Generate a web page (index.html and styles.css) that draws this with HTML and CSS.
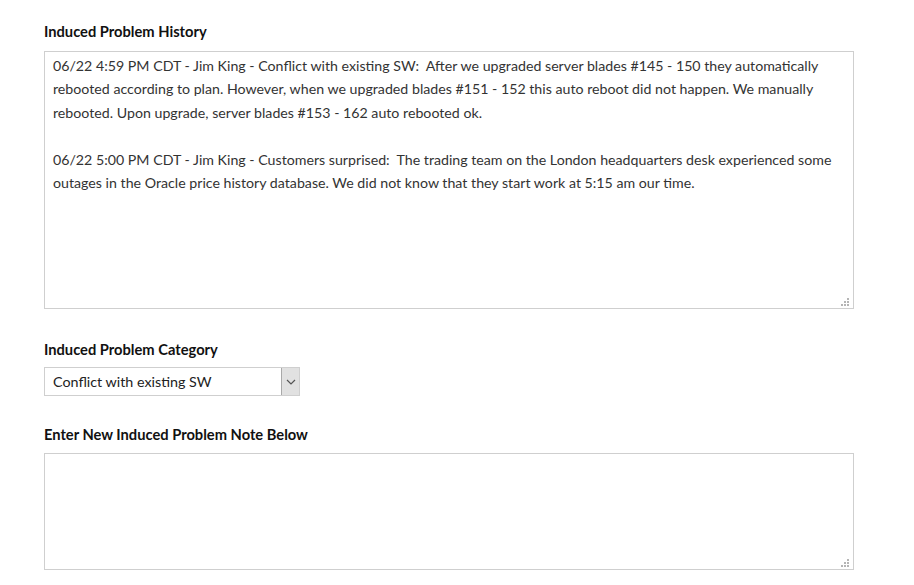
FILE: index.html
```html
<!DOCTYPE html>
<html>
<head>
<meta charset="utf-8">
<link rel="stylesheet" href="styles.css">
</head>
<body>
<div class="form">
  <label class="label first">Induced Problem History</label>
  <div class="area-wrap tall">
    <textarea class="area" readonly>06/22 4:59 PM CDT - Jim King - Conflict with existing SW:  After we upgraded server blades #145 - 150 they automatically rebooted according to plan. However, when we upgraded blades #151 - 152 this auto reboot did not happen. We manually rebooted. Upon upgrade, server blades #153 - 162 auto rebooted ok.

06/22 5:00 PM CDT - Jim King - Customers surprised:  The trading team on the London headquarters desk experienced some outages in the Oracle price history database. We did not know that they start work at 5:15 am our time.</textarea>
    <svg class="grip" width="9" height="9" viewBox="0 0 9 9"><g fill="#b5b5b5"><rect x="6" y="0" width="2" height="2"/><rect x="3" y="3" width="2" height="2"/><rect x="6" y="3" width="2" height="2"/><rect x="0" y="6" width="2" height="2"/><rect x="3" y="6" width="2" height="2"/><rect x="6" y="6" width="2" height="2"/></g></svg>
  </div>

  <label class="label cat">Induced Problem Category</label>
  <div class="select">
    <span class="select-text">Conflict with existing SW</span>
    <span class="select-arrow"><svg width="10" height="6" viewBox="0 0 10 6"><path d="M1 1 L5 5 L9 1" fill="none" stroke="#555" stroke-width="1.2"/></svg></span>
  </div>

  <label class="label">Enter New Induced Problem Note Below</label>
  <div class="area-wrap short">
    <textarea class="area"></textarea>
    <svg class="grip" width="9" height="9" viewBox="0 0 9 9"><g fill="#b5b5b5"><rect x="6" y="0" width="2" height="2"/><rect x="3" y="3" width="2" height="2"/><rect x="6" y="3" width="2" height="2"/><rect x="0" y="6" width="2" height="2"/><rect x="3" y="6" width="2" height="2"/><rect x="6" y="6" width="2" height="2"/></g></svg>
  </div>
</div>
</body>
</html>
```
FILE: styles.css
```css
html, body {
  margin: 0;
  padding: 0;
  background: #fff;
}
body {
  font-family: Lato, "Noto Sans", sans-serif;
  color: #333;
}
.form {
  display: flex;
  flex-direction: column;
  align-items: flex-start;
  padding: 22px 0 0 44px;
  width: 810px;
}
.label {
  display: block;
  font-weight: 700;
  font-size: 14.7px;
  line-height: 18px;
  color: #111;
  margin: 32px 0 10px;
}
.label.first {
  margin-top: 0;
  margin-bottom: 11px;
}
.label.cat {
  margin-top: 31px;
  margin-bottom: 9px;
}
.area-wrap {
  position: relative;
  width: 810px;
  display: flex;
}
.area-wrap.tall { height: 258px; }
.area-wrap.short { height: 117px; }
.area {
  box-sizing: border-box;
  width: 100%;
  height: 100%;
  margin: 0;
  border: 1px solid #cfcfcf;
  border-radius: 0;
  padding: 2px 8px;
  font-family: Lato, "Noto Sans", sans-serif;
  font-size: 14.2px;
  line-height: 23.4px;
  color: #333;
  resize: none;
  outline: none;
  overflow: hidden;
  background: #fff;
}
.grip {
  position: absolute;
  right: 4px;
  bottom: 2px;
}
.select {
  box-sizing: border-box;
  width: 256px;
  height: 29px;
  border: 1px solid #cfcfcf;
  display: flex;
  align-items: stretch;
  background: #fff;
  margin-bottom: 19px;
}
.select + .label { margin-top: 10px; }
.select-text {
  flex: 1;
  display: flex;
  align-items: center;
  padding-left: 8px;
  font-size: 14.3px;
  color: #222;
}
.select-arrow {
  width: 17px;
  background: #e1e1e1;
  border-left: 1px solid #a9a9a9;
  display: flex;
  align-items: center;
  justify-content: center;
}
```
